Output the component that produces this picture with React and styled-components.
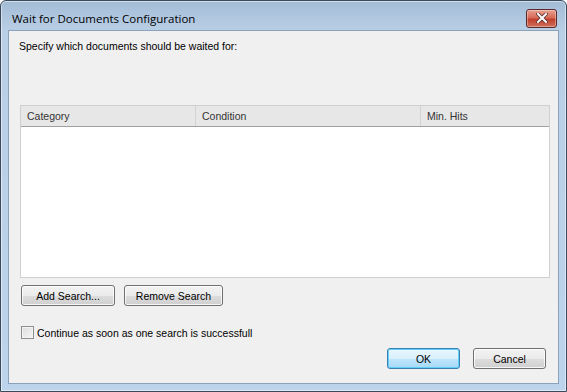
import * as React from 'react'
import styled, { createGlobalStyle } from 'styled-components'

const Global = createGlobalStyle`
  html, body { margin: 0; padding: 0; background: #fff; }
  body {
    font-family: "Liberation Sans", Arial, sans-serif;
    font-size: 10.5px;
    color: #000;
  }
`

const Window = styled.div`
  width: 567px;
  height: 392px;
  box-sizing: border-box;
  border: 1px solid #3a4a5a;
  border-radius: 6px 6px 0 0;
  background: linear-gradient(#a3bcd6 0px, #b9cfe6 30px, #bcd4ec 100%);
  display: flex;
  flex-direction: column;
  padding: 0 7px 7px 7px;
  box-shadow: inset 0 0 0 1px rgba(255,255,255,0.5);
`

const TitleBar = styled.div`
  height: 29px;
  display: flex;
  align-items: center;
  justify-content: space-between;
  padding-left: 4px;
  padding-right: 2px;
`

const Title = styled.div`
  font-family: "Open Sans", "Liberation Sans", sans-serif;
  font-size: 11.5px;
  color: #000;
  padding-top: 5px;
`

const CloseButton = styled.div`
  width: 29px;
  height: 17px;
  margin-top: 5px;
  border: 1px solid #5a2a2a;
  border-radius: 3px;
  background: linear-gradient(#e8a090 0%, #d86a58 45%, #c0402c 55%, #d0705c 100%);
  box-shadow: inset 0 0 0 1px rgba(255,255,255,0.35);
  display: flex;
  align-items: center;
  justify-content: center;
`

const Client = styled.div`
  flex: 1;
  background: #f0f0f0;
  border: 1px solid #8aa2bc;
  display: flex;
  flex-direction: column;
  padding: 0 10px 0 10px;
`

const Instruction = styled.div`
  margin-top: 9px;
  height: 14px;
`

const List = styled.div`
  margin-top: 51px;
  margin-left: 1px;
  width: 530px;
  height: 173px;
  box-sizing: border-box;
  border: 1px solid #d0d0d0;
  background: #fff;
  display: flex;
  flex-direction: column;
`

const Header = styled.div`
  height: 20px;
  display: grid;
  grid-template-columns: 175px 225px 1fr;
  background: #e7e7e7;
  border-bottom: 1px solid #a0a0a0;
`

const HeaderCell = styled.div`
  display: flex;
  align-items: center;
  padding-left: 6px;
  color: #333;
  border-right: ${p => (p.last ? 'none' : '1px solid #d2d2d2')};
`

const ButtonRow = styled.div`
  display: flex;
  gap: 9px;
  margin-top: 7px;
  margin-left: 2px;
`

const Button = styled.div`
  width: ${p => p.w}px;
  height: 21px;
  box-sizing: border-box;
  border: 1px solid ${p => (p.def ? '#3c7fb1' : '#707070')};
  border-radius: 3px;
  background: ${p =>
    p.def
      ? 'linear-gradient(#eaf6fd 0%, #d9f0fc 50%, #bee6fd 51%, #a7d9f5 100%)'
      : 'linear-gradient(#f2f2f2 0%, #ebebeb 50%, #dddddd 51%, #cfcfcf 100%)'};
  box-shadow: inset 0 0 0 1px ${p => (p.def ? '#60d0f8' : 'rgba(255,255,255,0.8)')};
  display: flex;
  align-items: center;
  justify-content: center;
`

const CheckRow = styled.label`
  display: flex;
  align-items: center;
  gap: 3px;
  margin-top: 20px;
  margin-left: 2px;
`

const CheckBox = styled.div`
  width: 13px;
  height: 13px;
  box-sizing: border-box;
  border: 1px solid #8e8f8f;
  background: linear-gradient(135deg, #dcdcdc 0%, #f6f6f6 100%);
  box-shadow: inset 0 0 0 1px #f4f4f4;
`

const Footer = styled.div`
  display: flex;
  justify-content: flex-end;
  gap: 13px;
  margin-top: 9px;
  margin-right: 2px;
`

export default function App() {
  return (
    <>
      <Global />
      <Window>
        <TitleBar>
          <Title>Wait for Documents Configuration</Title>
          <CloseButton>
            <svg width="12" height="10" viewBox="0 0 12 10">
              <path d="M2 1 L10 9 M10 1 L2 9" stroke="#5a3030" strokeWidth="3.6" strokeLinecap="square" />
              <path d="M2 1 L10 9 M10 1 L2 9" stroke="#fff" strokeWidth="2" strokeLinecap="square" />
            </svg>
          </CloseButton>
        </TitleBar>
        <Client>
          <Instruction>Specify which documents should be waited for:</Instruction>
          <List>
            <Header>
              <HeaderCell>Category</HeaderCell>
              <HeaderCell>Condition</HeaderCell>
              <HeaderCell last>Min. Hits</HeaderCell>
            </Header>
          </List>
          <ButtonRow>
            <Button w={94}>Add Search...</Button>
            <Button w={99}>Remove Search</Button>
          </ButtonRow>
          <CheckRow>
            <CheckBox />
            <span>Continue as soon as one search is successfull</span>
          </CheckRow>
          <Footer>
            <Button w={73} def>OK</Button>
            <Button w={73}>Cancel</Button>
          </Footer>
        </Client>
      </Window>
    </>
  )
}
